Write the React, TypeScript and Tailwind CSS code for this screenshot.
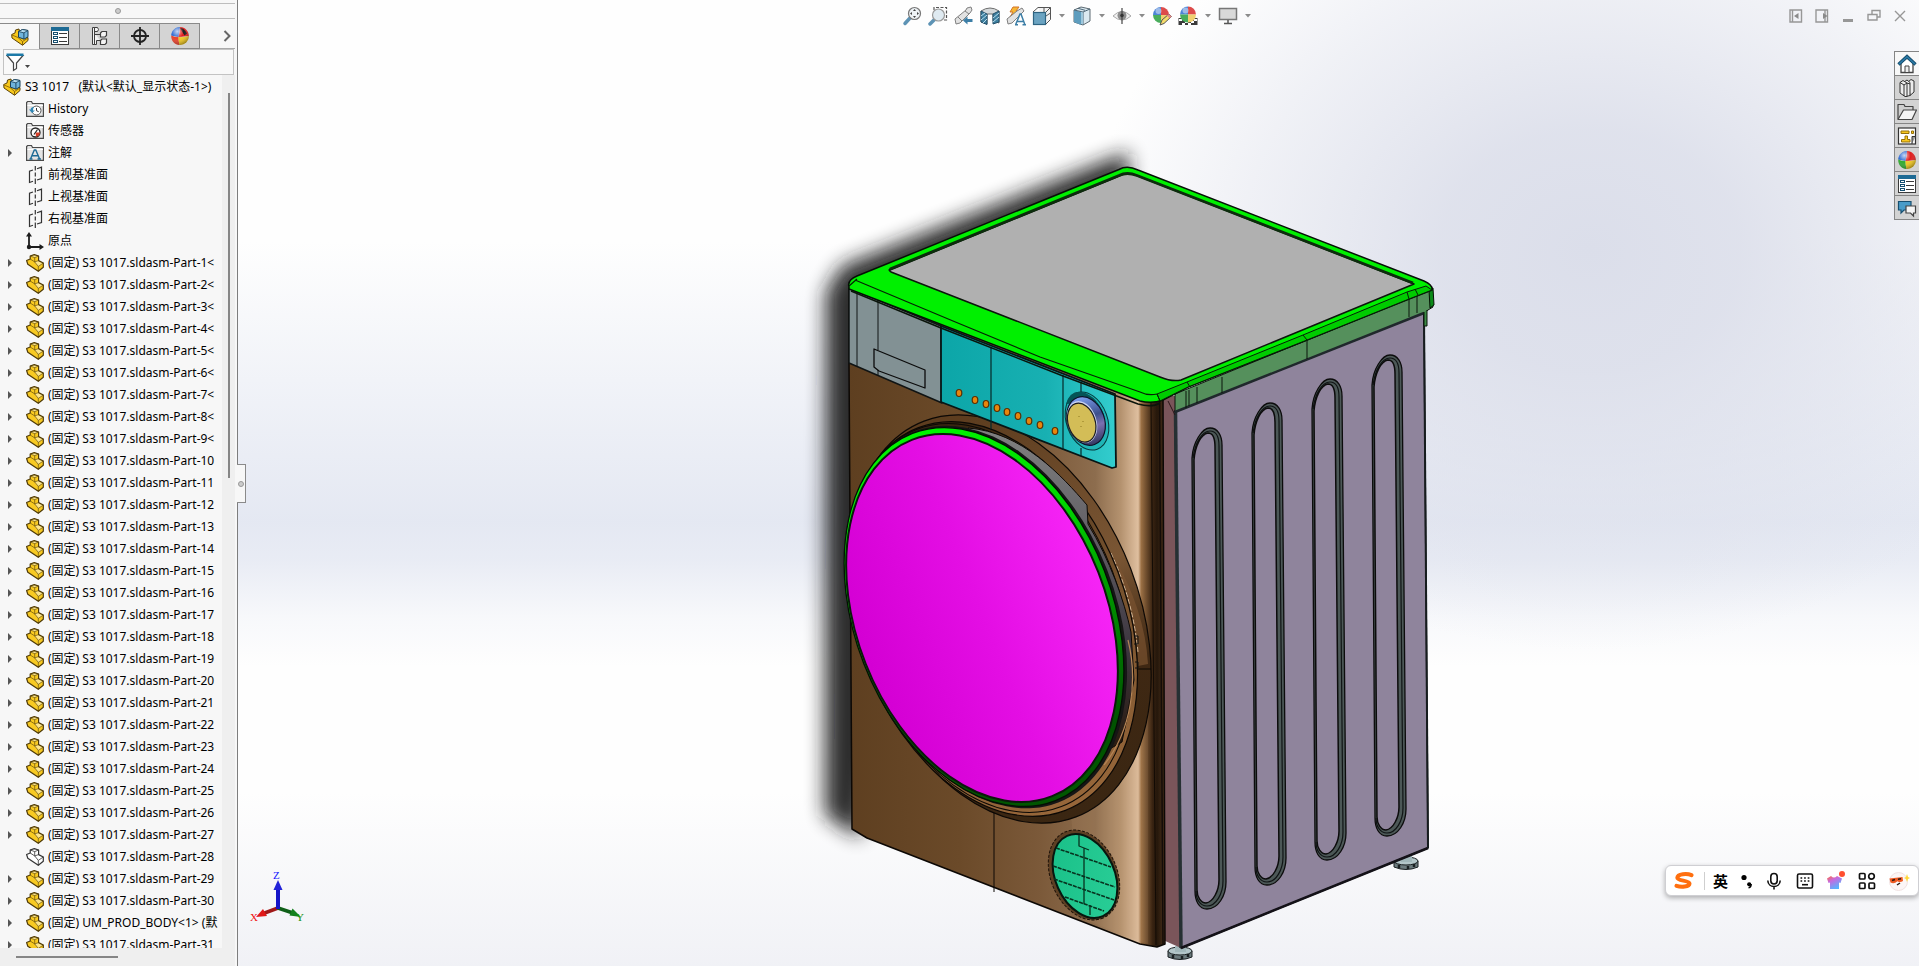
import type { ReactNode } from 'react';

const FONT = "font-['Noto_Sans','Noto_Sans_CJK_SC',sans-serif]";

/* ---------- shared icon pieces ---------- */

function PartIcon({ hollow = false }: { hollow?: boolean }) {
  const front = hollow ? '#ffffff' : '#f8ca22';
  const top = hollow ? '#ffffff' : '#fde58a';
  const line = hollow ? '#333333' : '#4f3a06';
  return (
    <svg viewBox="0 0 18 18" className="size-[18px] shrink-0" aria-hidden="true">
      <g strokeLinejoin="round">
        <path d="M.6 6.500 4.200 5V2L8.300.600 12.600 2V6.600L17.300 9V13.200L12.300 17.300 1.800 10.200Z" fill={front} />
        <path d="M4.200 2 8.300.600 12.600 2 8.700 3.600ZM8.700 7.900 12.600 6.600 17.300 9 12.300 12.400Z" fill={top} />
        <path d="M8.700 3.600V7.900L12.300 12.400M4.200 2 8.700 3.600 12.600 2M4.200 5 8.700 7.900 12.600 6.600M12.300 17.300V12.400L17.300 9" fill="none" stroke={line} strokeWidth=".8" opacity={hollow ? 1 : 0.75} />
        <path d="M.6 6.500 4.200 5V2L8.300.600 12.600 2V6.600L17.300 9V13.200L12.300 17.300 1.800 10.200Z" fill="none" stroke={line} strokeWidth="1.200" />
      </g>
    </svg>
  );
}

function AssemblyIcon() {
  return (
    <svg viewBox="0 0 18 18" className="size-[18px] shrink-0" aria-hidden="true">
      <path d="M.7 6.500 4 5 4.500 2 8 1 9 8 17 9.500V12.500L11.600 17.300 1 10Z" fill="#f7c81c" stroke="#5a4208" strokeLinejoin="round" />
      <path d="M1 7 7 9.500 11.500 13.500 17 10" fill="none" stroke="#8a6508" strokeWidth=".9" />
      <path d="M11.500 13.500V17" stroke="#8a6508" />
      <path d="m7.500 3.500 4-2 5.500 1v6.300l-4 2.400-5.500-2Z" fill="#6fb4dc" stroke="#173f58" strokeLinejoin="round" />
      <path d="m7.500 3.500 5.300 1.300 4.200-2.300-5.500-1Z" fill="#b7def2" stroke="#173f58" strokeWidth=".8" strokeLinejoin="round" />
      <path d="M12.900 4.800V11" stroke="#173f58" strokeWidth=".9" />
    </svg>
  );
}

function ListIcon() {
  return (
    <svg viewBox="0 0 20 20" className="size-5" aria-hidden="true">
      <rect x="1.500" y="1.500" width="17" height="17" fill="#fff" stroke="#3b3b3b" />
      <rect x="1" y="1" width="18" height="4" fill="#1d6a94" />
      <g fill="#fff" stroke="#174f70">
        <rect x="3.500" y="6.500" width="4" height="2" />
        <rect x="3.500" y="10.500" width="4" height="2" />
        <rect x="3.500" y="14.500" width="4" height="2" />
      </g>
      <path d="M9 7.500h8M9 11.500h8M9 15.500h8" stroke="#3b3b3b" />
    </svg>
  );
}

function BeachBall({ id, wedge = false }: { id: string; wedge?: boolean }) {
  return (
    <svg viewBox="0 0 20 20" className="size-5" aria-hidden="true">
      <defs>
        <radialGradient id={id} cx=".35" cy=".25" r=".8">
          <stop offset="0" stopColor="#fff" stopOpacity=".75" />
          <stop offset=".45" stopColor="#fff" stopOpacity="0" />
          <stop offset="1" stopColor="#000" stopOpacity=".4" />
        </radialGradient>
      </defs>
      <path d="M10 1C6 1 1.500 4 1.200 9.500L8.500 11Z" fill="#2060d0" />
      <path d="M10 1C15 1 18.800 5 18.800 10L8.500 11Q10 6 10 1Z" fill="#e01c1c" />
      <path d="M1.200 9.500Q4 11 8.500 11 8.500 15 9.500 19C5 19 1 15 1.200 9.500Z" fill={wedge ? '#e8402a' : '#2faa2f'} />
      <path d="M18.800 10Q14 11.500 8.500 11 8.500 15 9.500 19C15 19 18.800 15 18.800 10Z" fill="#f3c91c" />
      {wedge && <path d="M10 2Q14 2 17 7.500L14.500 9.500Z" fill="#1c1c1c" />}
      <circle cx="10" cy="10" r="9" fill={`url(#${id})`} />
    </svg>
  );
}

function Folder({ children }: { children: ReactNode }) {
  return (
    <svg viewBox="0 0 18 18" className="size-[18px] shrink-0" aria-hidden="true">
      <path d="M.6 16.400V2.500L1.600 1.500H5.500L6.500 3.500H17.400V16.400Z" fill="#e4e4e4" stroke="#4a4a4a" strokeWidth="1.200" />
      <path d="M1.500 5.500H17" stroke="#fff" />
      {children}
    </svg>
  );
}

const HistoryIcon = () => (
  <Folder>
    <circle cx="10.500" cy="10.500" r="4.500" fill="#fff" stroke="#555" />
    <path d="M10.500 8v2.700l2.200 1" fill="none" stroke="#333" />
    <path d="M3 9.500 6 13 9 10.500H7Q7 8 8 7 4.500 7 4.800 9.500Z" fill="#2f86b5" />
  </Folder>
);
const SensorIcon = () => (
  <Folder>
    <circle cx="9.500" cy="10.500" r="4.500" fill="#fff" stroke="#222" strokeWidth="1.300" />
    <path d="M9.500 10.500h4.500a4.500 4.500 0 0 1-4 4.300Z" fill="#d8402a" />
    <path d="m8 12.500 3.500-5" stroke="#222" strokeWidth="1.200" />
  </Folder>
);
const NoteIcon = () => (
  <Folder>
    <path d="M4.500 15 8.300 6h1.500l3.800 9M6.300 11.800h5.500M3.500 15h3M11.500 15h3.500" fill="none" stroke="#1d6a94" strokeWidth="1.400" />
  </Folder>
);
const PlaneIcon = () => (
  <svg viewBox="0 0 18 18" className="size-[18px] shrink-0" aria-hidden="true">
    <path d="M7 4 3.500 5.200V16.500L7 15.300M11 2.700 15.500 1.200V12.500L11 14" fill="none" stroke="#333" strokeWidth="1.200" />
    <path d="M9.300 0V4.500M9.300 6.500V10.500M9.300 12.500V18" stroke="#333" strokeWidth="1.200" />
  </svg>
);
const OriginIcon = () => (
  <svg viewBox="0 0 18 18" className="size-[18px] shrink-0" aria-hidden="true">
    <path d="M3 3V15H14" fill="none" stroke="#1c1c1c" strokeWidth="1.800" />
    <path d="M0 4.500 3 0 6 4.500ZM13.500 12 18 15 13.500 18Z" fill="#1c1c1c" />
    <circle cx="3" cy="15" r="2.200" fill="#1c1c1c" />
  </svg>
);

/* ---------- feature tree ---------- */

type Row = { label: string; icon: ReactNode; arrow: boolean };

const partRow = (n: number): Row => ({
  label: `(固定) S3 1017.sldasm-Part-${n}${n < 10 ? '<' : ''}`,
  icon: <PartIcon hollow={n === 28} />,
  arrow: n !== 28,
});

const rows: Row[] = [
  { label: 'History', icon: <HistoryIcon />, arrow: false },
  { label: '传感器', icon: <SensorIcon />, arrow: false },
  { label: '注解', icon: <NoteIcon />, arrow: true },
  { label: '前视基准面', icon: <PlaneIcon />, arrow: false },
  { label: '上视基准面', icon: <PlaneIcon />, arrow: false },
  { label: '右视基准面', icon: <PlaneIcon />, arrow: false },
  { label: '原点', icon: <OriginIcon />, arrow: false },
  ...Array.from({ length: 30 }, (_, i) => partRow(i + 1)),
  { label: '(固定) UM_PROD_BODY<1> (默', icon: <PartIcon />, arrow: true },
  partRow(31),
];

const panelTabs: { name: string; icon: ReactNode }[] = [
  { name: 'FeatureManager', icon: <AssemblyIcon /> },
  { name: 'PropertyManager', icon: <ListIcon /> },
  {
    name: 'ConfigurationManager',
    icon: (
      <svg viewBox="0 0 20 20" className="size-5" fill="#f4f4f4" stroke="#3f3f3f" aria-hidden="true">
        <path d="M3.500 1.500h4l1 2-1 2h-4ZM3.500 5.500V18.500H6.500V14.500H10M3.500 8.500H11" />
        <path d="M2.500 1.500h2v17h-2Z" />
        <path d="m10.500 7 1.500-1.500h4.500v4L15 11h-4.500ZM10.500 14.500 12 13h4.500v4L15 18.500h-4.500Z" strokeWidth="1.200" />
      </svg>
    ),
  },
  {
    name: 'DimXpertManager',
    icon: (
      <svg viewBox="0 0 20 20" className="size-5" fill="none" stroke="#222" strokeWidth="1.800" aria-hidden="true">
        <circle cx="10" cy="10" r="6" />
        <path d="M10 1v18M1 10h18" />
      </svg>
    ),
  },
  { name: 'DisplayManager', icon: <BeachBall id="ball-tab" wedge /> },
];

function Sidebar() {
  return (
    <aside className="flex h-full w-[238px] shrink-0 flex-col border-r border-[#7d7d7d] bg-[#f7f7f7]">
      <div className="mt-[3px] mr-0.5 flex h-4 items-center justify-center border-y border-[#bdbdbd]">
        <span className="size-1.5 rounded-full border border-[#999] bg-[#ccc]" />
      </div>
      <div className="mt-1 mr-0.5 flex h-[26px] items-stretch" role="tablist">
        {panelTabs.map((t, i) => (
          <button
            key={t.name}
            role="tab"
            aria-label={t.name}
            aria-selected={i === 0}
            className={
              i === 0
                ? 'flex w-10 items-center justify-center border-t border-r border-[#8a8a8a] bg-[#f7f7f7]'
                : 'flex w-10 items-center justify-center border-y border-r border-[#8a8a8a] bg-[#d4d4d4]'
            }
          >
            {t.icon}
          </button>
        ))}
        <button aria-label="更多" className="flex flex-1 items-center justify-end border-b border-[#a8a8a8] pr-1">
          <svg viewBox="0 0 8 12" className="h-3 w-2" fill="none" stroke="#666" strokeWidth="2" aria-hidden="true">
            <path d="m1.500 1 5 5-5 5" />
          </svg>
        </button>
      </div>
      <label className="mr-[3px] ml-[3px] flex h-[26px] shrink-0 items-center border border-[#c3c3c3] bg-[#f9f9f9] pl-0.5">
        <svg viewBox="0 0 24 20" className="h-5 w-6 shrink-0" aria-hidden="true">
          <path d="M1 3.500 7.500 11V18.500L10.500 16.500V11L17 3.500Z" fill="#fff" stroke="#444" strokeWidth="1.200" />
          <path d="M.5 1.500h17v2.500h-17Z" fill="#1d7aa8" />
          <path d="M19 13h5l-2.500 3Z" fill="#444" />
        </svg>
        <input aria-label="过滤" className="min-w-0 flex-1 bg-transparent text-xs outline-none" />
      </label>
      <div className="flex min-h-0 flex-1">
        <div className={`min-w-0 flex-1 overflow-hidden pt-px text-xs text-black ${FONT}`}>
          <div className="flex h-[22px] items-center gap-1 pl-[3px] whitespace-pre">
            <AssemblyIcon />
            <span>{'S3 1017   (默认<默认_显示状态-1>)'}</span>
          </div>
          <ul>
            {rows.map((r) => (
              <li key={r.label} className="flex h-[22px] items-center pl-2 whitespace-nowrap">
                <span className="w-[18px] shrink-0">
                  {r.arrow && (
                    <svg viewBox="0 0 4 8" className="h-2 w-1" aria-hidden="true">
                      <path d="M0 0 4 4 0 8Z" fill="#555" />
                    </svg>
                  )}
                </span>
                {r.icon}
                <span className="ml-1">{r.label}</span>
              </li>
            ))}
          </ul>
        </div>
        <div className="mr-0.5 flex w-[13px] justify-center bg-[#efefef] pt-[18px]">
          <span className="h-[385px] w-0.5 bg-[#858585]" />
        </div>
      </div>
      <div className="mr-0.5 h-[18px] shrink-0 bg-[#efefef] pt-2 pl-4">
        <div className="h-0.5 w-[102px] bg-[#858585]" />
      </div>
    </aside>
  );
}

/* ---------- heads-up toolbar ---------- */

const Caret = () => (
  <svg viewBox="0 0 6 4" className="mx-[7px] h-1 w-1.5" aria-hidden="true">
    <path d="M0 0H6L3 3.500Z" fill="#8b8b8b" />
  </svg>
);

const viewTools: { name: string; caret?: boolean; icon: ReactNode }[] = [
  {
    name: '整屏显示全图',
    icon: (
      <>
        <path d="M3 17.500 8 12" stroke="#5d93b5" strokeWidth="3.500" strokeLinecap="round" />
        <circle cx="12.500" cy="7.500" r="6" fill="#eef3f6" stroke="#777" strokeWidth="1.200" />
        <path d="m12.500 3 1.500 2h-3ZM12.500 12l1.500-2h-3ZM8 7.500l2-1.500v3ZM17 7.500l-2-1.500v3Z" fill="#444" />
      </>
    ),
  },
  {
    name: '局部放大',
    icon: (
      <>
        <path d="M6 4V1.500H18.500V14H16" fill="none" stroke="#555" strokeWidth="1.200" strokeDasharray="3 1.500" />
        <path d="M2 18 7 13" stroke="#5d93b5" strokeWidth="3.500" strokeLinecap="round" />
        <circle cx="10.500" cy="9" r="6" fill="#dfeaf1" stroke="#999" strokeWidth="1.200" />
      </>
    ),
  },
  {
    name: '上一视图',
    icon: (
      <>
        <path d="M1 13 12 4 13 2 17 1 18 4 16 7 6 17 2 18Z" fill="#e2e2e2" stroke="#808080" />
        <path d="m4 11 4 4M11 5l4 3" stroke="#808080" />
        <path d="M9 14.500 13.500 10.500V13H18.500V16H13.500V18.500Z" fill="#3c7ea6" />
      </>
    ),
  },
  {
    name: '剖面视图',
    icon: (
      <>
        <path d="M1 5Q10-1 19 5V17L13 15V8H7V18L1 16Z" fill="#d4d8da" stroke="#6c6c6c" />
        <path d="M1 5 7 8V18.500L1 16Z" fill="#3d7f9f" stroke="#24506a" />
        <path d="m13 8 6-3v11l-6 2Z" fill="#3d7f9f" stroke="#24506a" />
        <path d="m1 10 4-3M1 14l6-5M3 17l4-4M13 12l6-5M13 16l6-5" stroke="#b9dcec" />
      </>
    ),
  },
  {
    name: '动态注解视图',
    icon: (
      <>
        <path d="M7 1H13L10 5H13L4 11 7 6H4Z" fill="#f7b733" stroke="#d2752a" />
        <path d="M1 13 11 5 16 2 18 5 6 17 2 18Z" fill="#e2e2e2" stroke="#808080" />
        <path d="M9.500 19 14 8h1l4 11M11.500 15.500h6M9 18.700h3M16.500 18.700H20" fill="none" stroke="#3c7ea6" strokeWidth="1.500" />
      </>
    ),
  },
  {
    name: '视图定向',
    caret: true,
    icon: (
      <>
        <path d="M6 1.500H18.500V13.500L14 18M1 6 6 1.500M18.500 1.500 14 6M12 1.500V6M14 10l4.500-3" fill="#f3f3f3" stroke="#555" />
        <rect x="1.500" y="6.500" width="12" height="12" fill="#6ba3c1" stroke="#2f6482" strokeWidth="1.200" />
      </>
    ),
  },
  {
    name: '显示样式',
    caret: true,
    icon: (
      <>
        <path d="M2 4 9 1 18 3V15L11 19 2 16Z" fill="#dbe9f0" stroke="#5c6a72" />
        <path d="m2 4 7 2v13l-7-3Z" fill="#5e9dbe" />
        <path d="m6 2.300 7 2M11 6v13M2 4l9 2 7-3" fill="none" stroke="#4c6676" />
        <path d="m9 6 2 .5v12l-2-.8Z" fill="#9dc7dc" />
      </>
    ),
  },
  {
    name: '隐藏/显示项目',
    caret: true,
    icon: (
      <>
        <path d="M1 10Q10 1 19 10 10 18 1 10Z" fill="#f1f1f1" stroke="#a9a9a9" />
        <circle cx="10" cy="9.500" r="4.500" fill="#8c8c8c" />
        <path d="M10 2V18" stroke="#444" strokeWidth="1.200" />
        <circle cx="10" cy="9.500" r="1.800" fill="#333" />
      </>
    ),
  },
  {
    name: '编辑外观',
    icon: (
      <>
        <path d="M9 1A8 8 0 0 0 1 9H9Z" fill="#4d84d6" />
        <path d="M9 1a8 8 0 0 1 8 8H9Z" fill="#dd4b4b" />
        <path d="M1 9a8 8 0 0 0 8 8V9Z" fill="#49ad5c" />
        <path d="M17 9a8 8 0 0 1-8 8V9Z" fill="#f0d070" />
        <circle cx="6.500" cy="5" r="3" fill="#fff" opacity=".45" />
        <path d="m8 19 2-5 7-6 2.500 2.500L12 17.500Z" fill="#f6dc6b" stroke="#555" />
        <path d="m15 9.500 2.500 3 2.200-2L17 8Z" fill="#e58b8b" />
      </>
    ),
  },
  {
    name: '应用布景',
    caret: true,
    icon: (
      <>
        <rect x="0.500" y="12" width="19" height="7" fill="#3b3b3b" />
        <path d="M1 13h3v2H1ZM7 15h3v2H7ZM13 15h3v2h-3ZM16 13h3v2h-3ZM4 17h3v2H4ZM10 17h3v2h-3Z" fill="#fff" />
        <path d="M10 .5A8 8 0 0 0 2 8.500H10Z" fill="#4d84d6" />
        <path d="M10 .5A8 8 0 0 1 18 8.500H10Z" fill="#dd4b4b" />
        <path d="M2 8.500A8 8 0 0 0 10 16.500V8.500Z" fill="#49ad5c" />
        <path d="M18 8.500A8 8 0 0 1 10 16.500V8.500Z" fill="#f0d070" />
        <circle cx="7.500" cy="4.500" r="3" fill="#fff" opacity=".45" />
      </>
    ),
  },
  {
    name: '视图设定',
    caret: true,
    icon: (
      <>
        <rect x="1.500" y="2.500" width="17" height="11" fill="#d9d9d9" stroke="#777" strokeWidth="1.500" />
        <path d="M10 14v3M6 17.500h8" stroke="#555" strokeWidth="1.500" />
      </>
    ),
  },
];

function ViewToolbar() {
  return (
    <div role="toolbar" aria-label="前导视图" className="flex items-center">
      {viewTools.map((t) => (
        <div key={t.name} className="flex items-center">
          <button aria-label={t.name} className="mx-[3px] block size-5">
            <svg viewBox="0 0 20 20" className="size-5" aria-hidden="true">{t.icon}</svg>
          </button>
          {t.caret && <span className="-mx-[3px]"><Caret /></span>}
        </div>
      ))}
    </div>
  );
}

const windowButtons: { name: string; d: string; fill?: string }[] = [
  { name: '左面板', d: 'M1 1H12.500V13H1ZM3.500 1V13', fill: 'M9.500 4V10L5 7Z' },
  { name: '右面板', d: 'M1 1H12.500V13H1ZM10 1V13', fill: 'M8 4V10L12.500 7Z' },
  { name: '最小化', d: 'M2 11.500H12' },
  { name: '还原', d: 'M5 5V1.500H13V8H10M1 5.500H10V11H1Z' },
  { name: '关闭', d: 'M2 2 12 12M12 2 2 12' },
];

function WindowButtons() {
  return (
    <div className="absolute top-[9px] right-3 flex gap-3">
      {windowButtons.map((b) => (
        <button key={b.name} aria-label={b.name} className="size-3.5">
          <svg viewBox="0 0 14 14" className="size-3.5" aria-hidden="true">
            <path d={b.d} fill="none" stroke="#979797" strokeWidth={b.name === '最小化' ? 3 : 1.400} />
            {b.fill && <path d={b.fill} fill="#8a8a8a" />}
          </svg>
        </button>
      ))}
    </div>
  );
}

/* ---------- task pane ---------- */

const taskTabs: { name: string; icon: ReactNode }[] = [
  {
    name: '主页',
    icon: (
      <svg viewBox="0 0 20 20" className="size-5" aria-hidden="true">
        <path d="M4 9V18.500H16V9L10 4Z" fill="#fff" stroke="#444" strokeWidth="1.300" />
        <path d="M8 18V12h4v6" fill="#eee" stroke="#444" />
        <path d="M1.500 10.500 10 2.500 18.500 10.500" fill="none" stroke="#174f70" strokeWidth="3.400" />
        <path d="M2 10 10 2.700 18 10" fill="none" stroke="#2b7ca8" strokeWidth="1.500" />
      </svg>
    ),
  },
  {
    name: '设计库',
    icon: (
      <svg viewBox="0 0 20 20" className="size-5" fill="#ededed" stroke="#333" strokeLinejoin="round" aria-hidden="true">
        <path d="m11 4 3-2.500 3 1.500v11l-4 3.500Z" />
        <path d="m7 4 3-2 3 2.500v13l-4 1Z" />
        <path d="m3 4.500 3-2 4 2.500v13.500H8l-5-3.500Z" />
        <path d="M3 4.500 7 7V18M7 7l3-2M10 5l3 1" fill="none" />
      </svg>
    ),
  },
  {
    name: '文件探索器',
    icon: (
      <svg viewBox="0 0 20 20" className="size-5" stroke="#444" strokeWidth="1.200" strokeLinejoin="round" aria-hidden="true">
        <path d="M1 17V2.500H7L8 4.500H16V8" fill="#cfcfcf" />
        <path d="M1 17.500 6.500 8H19.500L15 17.500Z" fill="#f4f4f4" />
      </svg>
    ),
  },
  {
    name: '视图调色板',
    icon: (
      <svg viewBox="0 0 20 20" className="size-5" aria-hidden="true">
        <rect x="1.500" y="2" width="17" height="16" fill="#fff" stroke="#333" strokeWidth="1.200" />
        <path d="M4 5h8v2.500H4ZM14.500 5h2v2.500h-2ZM8 10h2.500v3.500H13V16H4.500v-2.500H8Z" fill="#f9c81d" stroke="#94700a" />
        <path d="M15 18V10.500h3.500" fill="#999" stroke="#333" />
      </svg>
    ),
  },
  { name: '外观', icon: <BeachBall id="ball-task" /> },
  { name: '自定义属性', icon: <ListIcon /> },
  {
    name: '论坛',
    icon: (
      <svg viewBox="0 0 20 20" className="size-5" strokeWidth="1.200" aria-hidden="true">
        <path d="M1.500 3.500H14V12H7L4 15V12H1.500Z" fill="#4a9cc9" stroke="#174f70" />
        <path d="M9 8H18.500V15H16.500V18L13.500 15H9Z" fill="#f4f4f4" stroke="#444" />
      </svg>
    ),
  },
];

function TaskPane() {
  return (
    <nav aria-label="任务窗格" className="absolute top-[51px] right-0 w-[25px] border-t border-l border-[#858585]">
      {taskTabs.map((t, i) => (
        <button
          key={t.name}
          aria-label={t.name}
          className={
            i === 0
              ? 'flex h-6 w-full items-center justify-center border-b border-[#858585] bg-[#f8f8f8]'
              : 'flex h-6 w-full items-center justify-center border-b border-[#858585] bg-[#d3d3d3]'
          }
        >
          {t.icon}
        </button>
      ))}
    </nav>
  );
}

/* ---------- input method bar ---------- */

function InputMethodBar() {
  return (
    <div className="absolute right-0 bottom-[70px] flex h-[31px] w-[254px] items-center rounded-md border border-[#cfcfd3] bg-white pl-2 shadow-[0_2px_5px_rgba(0,0,0,0.3)]">
      <svg viewBox="0 0 20 18" className="mr-2.5 h-[18px] w-5" aria-hidden="true">
        <path d="M17.500 3.200C13 1.200 3.500 1.800 3.300 5.800 3.200 9 15.600 8.300 15.500 11.600 15.400 15 7 15.400 2.500 13.800" fill="none" stroke="#ff6f0f" strokeWidth="4" strokeLinecap="round" />
      </svg>
      <span className="mr-2 h-[18px] w-px bg-[#cfcfcf]" />
      <button className="mr-3 font-['Noto_Sans_CJK_SC',sans-serif] text-[15px] leading-none font-bold text-black">英</button>
      <div className="flex items-center gap-3">
        <button aria-label="标点">
          <svg viewBox="0 0 14 18" className="h-[18px] w-3.5" aria-hidden="true">
            <circle cx="4" cy="5.500" r="2.600" />
            <circle cx="9.200" cy="12.300" r="2.100" />
            <path d="M11.200 12Q11.500 15 8.500 16" fill="none" stroke="#000" strokeWidth="1.300" />
          </svg>
        </button>
        <button aria-label="语音">
          <svg viewBox="0 0 16 18" className="h-[18px] w-4" fill="none" stroke="#111" strokeWidth="1.600" aria-hidden="true">
            <rect x="4.800" y="1.500" width="6.400" height="10.500" rx="3.200" />
            <path d="M1.800 8.500C2 16.500 14 16.500 14.200 8.500M8 14.500V17.500" />
          </svg>
        </button>
        <button aria-label="软键盘" className="ml-0.5">
          <svg viewBox="0 0 18 18" className="size-[18px]" fill="none" stroke="#111" strokeWidth="1.600" aria-hidden="true">
            <rect x="1.500" y="2" width="15" height="14" rx="1.500" />
            <path d="M4.500 6h9M4.500 9h9" strokeDasharray="1.700 1.900" />
            <path d="M6 12.700h6" />
          </svg>
        </button>
        <button aria-label="皮肤">
          <svg viewBox="0 0 20 22" className="h-[22px] w-5" aria-hidden="true">
            <defs>
              <linearGradient id="shirt" x1="0" y1="0" x2=".6" y2="1">
                <stop offset="0" stopColor="#ff6a3c" />
                <stop offset=".4" stopColor="#c56be0" />
                <stop offset="1" stopColor="#53b5ff" />
              </linearGradient>
            </defs>
            <path d="M5 6Q8 9 11 6L16 8.500 14.500 13 13 12.500V19H4V12.500L2.500 13 1 8.500Z" fill="url(#shirt)" />
            <circle cx="16" cy="4" r="3" fill="#ff4f30" />
          </svg>
        </button>
        <button aria-label="工具箱">
          <svg viewBox="0 0 18 18" className="size-[18px]" fill="none" stroke="#111" strokeWidth="1.700" aria-hidden="true">
            <rect x="1.500" y="1.500" width="5.500" height="5.500" rx="1" />
            <circle cx="13.500" cy="4.300" r="2.800" />
            <rect x="1.500" y="11" width="5.500" height="5.500" rx="1" />
            <rect x="11" y="11" width="5.500" height="5.500" rx="1" />
          </svg>
        </button>
        <button aria-label="助手">
          <svg viewBox="0 0 22 22" className="size-[22px]" aria-hidden="true">
            <circle cx="10.500" cy="11.500" r="9" fill="#fcf6f6" stroke="#f1e2e2" />
            <path d="M1.500 8.500 14.500 7 15 11Q12 13 9.500 11.200 6 14.500 2.500 12.500Z" fill="#ef5a22" />
            <path d="m4 10.500 3-1M10 9.200l3-.4M9 15l3-2" stroke="#2b1a12" strokeWidth="1.500" />
            <path d="m19 4 1 3 2 1-2 1-1 3-1-3-2-1 2-1Z" fill="#ffd83a" />
          </svg>
        </button>
      </div>
    </div>
  );
}

/* ---------- 3D scene ---------- */

const grooves = [
  { x: 1192, top: 428, bottom: 909 },
  { x: 1252, top: 403, bottom: 885 },
  { x: 1312, top: 379, bottom: 860 },
  { x: 1372, top: 355, bottom: 836 },
];

const leds = [
  [959, 393], [975, 400], [986, 404], [997, 408], [1007, 412],
  [1018, 416], [1029, 421], [1040, 425], [1055, 431],
];

function Groove({ x, top, bottom }: { x: number; top: number; bottom: number }) {
  const outer = `M${x} ${top + 30}C${x + 1} ${top + 14} ${x + 10} ${top} ${x + 18} ${top}C${x + 26} ${top} ${x + 30} ${top + 8} ${x + 30} ${top + 17}L${x + 34} ${bottom - 27}C${x + 34} ${bottom - 13} ${x + 26} ${bottom} ${x + 15} ${bottom}C${x + 7} ${bottom} ${x + 3} ${bottom - 8} ${x + 3} ${bottom - 18}Z`;
  const middle = `M${x + 1} ${top + 30}C${x + 3} ${top + 15} ${x + 10} ${top + 3} ${x + 18} ${top + 3}C${x + 24} ${top + 3} ${x + 27} ${top + 9} ${x + 27} ${top + 18}L${x + 31} ${bottom - 28}C${x + 31} ${bottom - 15} ${x + 24} ${bottom - 3} ${x + 15} ${bottom - 3}C${x + 8} ${bottom - 3} ${x + 4} ${bottom - 10} ${x + 4} ${bottom - 18}`;
  const inner = `M${x + 2} ${top + 32}C${x + 3} ${top + 18} ${x + 9} ${top + 6} ${x + 16} ${top + 5}C${x + 21} ${top + 5} ${x + 23} ${top + 11} ${x + 23} ${top + 19}L${x + 27} ${bottom - 29}C${x + 27} ${bottom - 18} ${x + 21} ${bottom - 7} ${x + 14} ${bottom - 6}C${x + 9} ${bottom - 6} ${x + 5} ${bottom - 12} ${x + 5} ${bottom - 19}Z`;
  return (
    <g>
      <path d={outer} fill="#4c5857" stroke="#0c0c0c" strokeWidth="1.300" />
      <path d={middle} fill="none" stroke="#101415" strokeWidth="1.200" />
      <path d={inner} fill="#8f849c" stroke="#0c0c0c" strokeWidth="1.500" />
    </g>
  );
}

function Foot({ x, y }: { x: number; y: number }) {
  return (
    <g stroke="#1a2022" strokeWidth="1">
      <path d={`M${x - 12} ${y}V${y + 6}Q${x} ${y + 11} ${x + 12} ${y + 6}V${y}Z`} fill="#6c7b7e" />
      <ellipse cx={x} cy={y} rx="12" ry="4" fill="#b3c6c9" />
      <path d={`M${x - 7} ${y + 4}V${y + 7}M${x + 2} ${y + 5}V${y + 8}M${x + 8} ${y + 3}V${y + 6}`} strokeWidth="2.500" />
      <path d={`M${x - 5} ${y - 5}H${x + 6}V${y + 1}H${x - 5}Z`} fill="#a2b8bb" stroke="none" />
    </g>
  );
}

function Washer() {
  return (
    <g strokeLinejoin="round">
      <path d="M1128 152 842 266 826 292 825 815 860 838 900 600 1130 300Z" fill="#1c1c1e" filter="url(#soft)" opacity=".92" />

      <Foot x={1180} y={951} />
      <Foot x={1406} y={861} />

      {/* side wall */}
      <path d="M1160 396 1175 396 1181 948 1163 940Z" fill="#7a555a" />
      <path d="M1175 411 1424 312 1428 848 1181 948Z" fill="#8f849c" stroke="#0a0a0a" strokeWidth="1.500" />
      <path d="M1175.500 411 1181 948" stroke="#263033" strokeWidth="3.500" />
      <path d="M1181 948 1428 848" stroke="#141218" strokeWidth="2.500" />
      <path d="M1424 314 1428 848" stroke="#161c1e" strokeWidth="2" />
      {grooves.map((g) => <Groove key={g.x} {...g} />)}

      {/* front wall */}
      <path d="M849 363 849 288 1140 400 1163 398 1165 944 1157 947 1140 944 867 838 852 829Z" fill="url(#front)" stroke="#0c0805" strokeWidth="1.500" />
      <path d="M1151 402 1156 945" stroke="#120b05" />
      <path d="M1159.500 400 1163 944" stroke="#140c08" strokeWidth="1.500" />
      <path d="M994 806V892" stroke="#0c0805" />
      <path d="M1068 780Q1110 760 1124 700L1135 640 1148 700V944L1080 918Z" fill="#c49a74" opacity=".12" />

      {/* door recess */}
      <ellipse cx="1000" cy="619" rx="212" ry="140" transform="rotate(69 1000 619)" fill="url(#recess)" stroke="#0c0805" strokeWidth="1.200" />
      <path d="M1112 553Q1145 610 1148 664L1138 666Q1138 620 1112 553Z" fill="#7a5330" opacity=".7" />
      <path d="M1111 553Q1133 600 1138 652" fill="none" stroke="#f0d4b4" strokeDasharray="5 2" opacity=".8" />
      <ellipse cx="992" cy="619" rx="205" ry="134.500" transform="rotate(69 992 619)" fill="url(#floor)" stroke="#0c0805" strokeWidth="1.200" />
      <ellipse cx="989" cy="618" rx="202" ry="132" transform="rotate(69 989 618)" fill="none" stroke="#0c0805" />
      <path d="M968 428C1022 432 1062 476 1087 505L1088 524C1110 560 1124 600 1131 632L1134 680 1122 742 1090 760 1020 520Z" fill="url(#gasket)" stroke="#0c0805" />
      <path d="M1138 669H1151" stroke="#0c0805" />
      <path d="M1128 640C1138 680 1132 730 1104 765" fill="none" stroke="#b58456" strokeWidth="1.200" />
      <path d="M1134 636h4v8h-4M1135 662h3v6h-3" fill="none" stroke="#111" />

      {/* door */}
      <ellipse cx="986" cy="617" rx="199" ry="130" transform="rotate(68.700 986 617)" fill="#151515" />
      <ellipse cx="984" cy="617" rx="197" ry="129" transform="rotate(68.700 984 617)" fill="url(#ring)" stroke="#031003" strokeWidth="1.300" />
      <ellipse cx="982" cy="618" rx="191.500" ry="125" transform="rotate(68.500 982 618)" fill="url(#glass)" stroke="#0d180d" strokeWidth="2" />

      {/* drawer */}
      <path d="M849 288 941 326 942 403 849 363Z" fill="#829194" stroke="#101414" strokeWidth="1.500" />
      <path d="M857 292V366M878 301V350M878 370V375" stroke="#101414" />
      <path d="M874 349 925 370V388L879 371 874 367Z" fill="#829194" stroke="#0b0b0b" strokeWidth="1.300" />

      {/* control panel */}
      <path d="M941 326 1115 394 1116 467 1112 468 941 402Z" fill="url(#teal)" stroke="#061616" strokeWidth="1.800" />
      <path d="M991 347V422M991 422V429M1063 375V450M1081 382V396M1081 448V456" stroke="#052828" strokeWidth="1.200" />
      {leds.map(([x, y]) => (
        <ellipse key={x} cx={x} cy={y} rx="2.800" ry="3.500" fill="#e8860c" stroke="#5a2f04" strokeWidth="1.200" />
      ))}
      <ellipse cx="1087" cy="421" rx="30" ry="20.500" transform="rotate(70 1087 421)" fill="#1fb5b6" stroke="#06393b" />
      <path d="M1066 404Q1070 390 1082 392 1098 396 1105 418L1096 402Z" fill="#055457" />
      <ellipse cx="1086" cy="421" rx="25" ry="18.500" transform="rotate(70 1086 421)" fill="url(#knob)" stroke="#0d1228" strokeWidth="1.200" />
      <ellipse cx="1082" cy="422" rx="21.500" ry="14.500" transform="rotate(72 1082 422)" fill="#c9d3f0" />
      <ellipse cx="1082.500" cy="422.500" rx="20" ry="13.500" transform="rotate(72 1082 422)" fill="#d3bd57" stroke="#1a1a22" strokeWidth="1.200" />
      <path d="M1079 416v1M1083 421v1M1081 426v1" stroke="#8d7820" />

      {/* lid */}
      <path d="M1175 394 1430 290 1433 307 1428 310 1424 313 1175 412Z" fill="#55905c" stroke="#0b150b" />
      <path d="M1175 412 1424 313" stroke="#20282c" strokeWidth="2.500" />
      <path d="M1424 312V326H1427V310" fill="#3a8a44" stroke="#0b150b" />
      <path d="M1186 391V408M1189 390V406M1197 387V403M1222 377V393M1307 341V359M1409 299V317M1417 296V313" stroke="#0b150b" />
      <path d="M1429 290 1433 288 1434 305 1430 308Z" fill="#0a8a18" stroke="#041004" />
      <path d="M849 287Q847 280 857 276L1119 169.500Q1127 165 1138 170L1424 281Q1433 285 1432 290L1409 299 1307 340 1188 387 1163 400Q1152 404 1140 401L849 289Z" fill="#00f000" stroke="#061006" strokeWidth="1.500" />
      <path d="M1157 394 1187 382 1303 335 1407 292 1426 286 1432 290 1409 299 1307 340 1188 387 1160 401Z" fill="#00cc00" stroke="#052005" />
      <path d="M1303 335 1307 340M1407 292 1409 299M1415 289 1418 295M1187 382 1190 387M1157 394 1160 401" stroke="#052005" />
      <path d="M855 280 953 321 1040 357 1140 392Q1148 396 1157 394M849 286 857 279" fill="none" stroke="#052005" strokeWidth="1.200" />
      <path d="M851 291 941 328 1063 376 1138 404Q1152 408 1160 403" fill="none" stroke="#0a140a" strokeWidth="1.500" />
      <path d="M890 270 1117 177Q1127 171 1138 176L1414 284 1181 380Q1172 382 1160 377L891 272Q888 270 890 269Z" fill="#b0b0b0" stroke="#0c160c" strokeWidth="1.500" />
      <path d="M890 269 1119 175.500Q1127 171.500 1137 175.500L1413 283" fill="none" stroke="#0c2c0c" strokeWidth="2.800" />
      <path d="m1168 401 7 14" stroke="#2b1518" />

      {/* pump filter vent */}
      <ellipse cx="1084" cy="875" rx="47" ry="33" transform="rotate(66 1084 875)" fill="#5d3f23" stroke="#1d1209" strokeDasharray="3 1.500" />
      <ellipse cx="1085" cy="876" rx="44" ry="29.500" transform="rotate(66 1085 876)" fill="url(#vent)" stroke="#07170f" strokeWidth="2" />
      <path d="M1056 848 1111 867M1053 866 1115 887M1054 879 1114 900M1065 897 1104 911" stroke="#07331f" strokeWidth="1.600" strokeDasharray="4 1" />
      <path d="M1084 848V904M1079 835V846L1089 850M1090 905V915" fill="none" stroke="#07331f" strokeWidth="1.300" />
    </g>
  );
}

function Triad() {
  return (
    <g className="font-['Liberation_Serif',serif] text-[11px]">
      <path d="M278 908 262 914" stroke="#a01818" strokeWidth="3.500" />
      <path d="m256 917 7-8 4 7Z" fill="#e01818" />
      <path d="M278 908 293 913" stroke="#0f5f18" strokeWidth="3.500" />
      <path d="m301 917-8.500-8.500-3 7Z" fill="#14801e" />
      <path d="M278 909V888" stroke="#1414c8" strokeWidth="4" />
      <path d="m278 880 4.500 10h-9Z" fill="#2222d8" />
      <text x="273" y="879" fill="#1414ff">Z</text>
      <text x="250" y="921" fill="#f01010">X</text>
      <text x="296" y="921" fill="#109010">Y</text>
    </g>
  );
}

function Scene() {
  return (
    <svg viewBox="238 0 1681 966" preserveAspectRatio="xMidYMid slice" className="absolute inset-0 size-full" role="img" aria-label="S3 1017">
      <defs>
        <filter id="soft" x="-20%" y="-20%" width="140%" height="140%"><feGaussianBlur stdDeviation="10" /></filter>
        <linearGradient id="band" x1="0" y1="0" x2="0" y2="1">
          <stop offset=".25" stopColor="#dde2ef" stopOpacity="0" />
          <stop offset=".45" stopColor="#dde2ef" stopOpacity=".55" />
          <stop offset=".54" stopColor="#dde2ef" stopOpacity=".78" />
          <stop offset=".58" stopColor="#dde2ef" stopOpacity=".65" />
          <stop offset=".64" stopColor="#dde2ef" stopOpacity=".2" />
          <stop offset=".69" stopColor="#dde2ef" stopOpacity="0" />
          <stop offset=".82" stopColor="#eff0f5" stopOpacity="0" />
          <stop offset="1" stopColor="#eff0f5" stopOpacity=".9" />
        </linearGradient>
        <radialGradient id="lobe" gradientUnits="userSpaceOnUse" cx="0" cy="0" r="1" gradientTransform="translate(1590 250) scale(500 400)">
          <stop offset="0" stopColor="#dbdeea" />
          <stop offset=".3" stopColor="#dbdeea" stopOpacity=".88" />
          <stop offset=".7" stopColor="#dbdeea" stopOpacity=".4" />
          <stop offset="1" stopColor="#dbdeea" stopOpacity="0" />
        </radialGradient>
        <linearGradient id="front" gradientUnits="userSpaceOnUse" x1="849" y1="0" x2="1165" y2="0">
          <stop offset="0" stopColor="#5e3f20" />
          <stop offset=".35" stopColor="#6b4a29" />
          <stop offset=".6" stopColor="#7b5939" />
          <stop offset=".78" stopColor="#8d6d4e" />
          <stop offset=".86" stopColor="#b4926f" />
          <stop offset=".915" stopColor="#dfbf9f" />
          <stop offset=".925" stopColor="#9a6f44" />
          <stop offset=".96" stopColor="#3a2412" />
          <stop offset=".975" stopColor="#25170b" />
          <stop offset="1" stopColor="#4a3019" />
        </linearGradient>
        <linearGradient id="recess" gradientUnits="userSpaceOnUse" x1="940" y1="430" x2="1100" y2="810" gradientTransform="rotate(-69 1000 619)">
          <stop offset="0" stopColor="#5d3d1f" />
          <stop offset=".45" stopColor="#7a5634" />
          <stop offset=".7" stopColor="#3f2813" />
          <stop offset="1" stopColor="#3a2612" />
        </linearGradient>
        <linearGradient id="floor" gradientUnits="userSpaceOnUse" x1="940" y1="430" x2="1080" y2="810" gradientTransform="rotate(-69 992 619)">
          <stop offset="0" stopColor="#3a2511" />
          <stop offset=".4" stopColor="#6f4d2b" />
          <stop offset="1" stopColor="#98673a" />
        </linearGradient>
        <linearGradient id="gasket" gradientUnits="userSpaceOnUse" x1="0" y1="430" x2="0" y2="740">
          <stop offset="0" stopColor="#808080" />
          <stop offset=".28" stopColor="#67656a" />
          <stop offset=".7" stopColor="#3d3640" />
          <stop offset="1" stopColor="#2a1c12" />
        </linearGradient>
        <linearGradient id="ring" gradientUnits="userSpaceOnUse" x1="920" y1="430" x2="1090" y2="800" gradientTransform="rotate(-68.700 984 617)">
          <stop offset="0" stopColor="#00f400" />
          <stop offset=".3" stopColor="#00d800" />
          <stop offset=".6" stopColor="#008a00" />
          <stop offset=".85" stopColor="#005200" />
          <stop offset="1" stopColor="#005800" />
        </linearGradient>
        <linearGradient id="glass" gradientUnits="userSpaceOnUse" x1="880" y1="690" x2="1110" y2="600" gradientTransform="rotate(-68.500 982 618)">
          <stop offset="0" stopColor="#d400d4" />
          <stop offset=".5" stopColor="#e40ee4" />
          <stop offset="1" stopColor="#f624f6" />
        </linearGradient>
        <linearGradient id="teal" x1="0" y1="0" x2="1" y2="0">
          <stop offset="0" stopColor="#0ca6a8" />
          <stop offset=".6" stopColor="#18b0b2" />
          <stop offset="1" stopColor="#33cdce" />
        </linearGradient>
        <linearGradient id="knob" gradientUnits="userSpaceOnUse" x1="1078" y1="398" x2="1096" y2="448" gradientTransform="rotate(-70 1086 421)">
          <stop offset="0" stopColor="#7f9ff0" />
          <stop offset=".4" stopColor="#3c4f8c" />
          <stop offset=".6" stopColor="#7a70b0" />
          <stop offset="1" stopColor="#252d52" />
        </linearGradient>
        <linearGradient id="vent" x1="0" y1="1" x2="1" y2="0">
          <stop offset="0" stopColor="#18bf87" />
          <stop offset="1" stopColor="#2bcf98" />
        </linearGradient>
      </defs>
      <rect x="238" width="1681" height="966" fill="#fefefe" />
      <rect x="238" width="1681" height="966" fill="url(#band)" />
      <rect x="238" width="1681" height="966" fill="url(#lobe)" />
      <Washer />
      <Triad />
    </svg>
  );
}

export default function App() {
  return (
    <div className="flex h-screen w-full overflow-hidden bg-white">
      <Sidebar />
      <main className="relative min-w-0 flex-1">
        <Scene />
        <header className="relative flex justify-center pt-1.5 pr-1">
          <ViewToolbar />
          <WindowButtons />
        </header>
        <TaskPane />
        <button aria-label="折叠面板" className="absolute top-[464px] -left-px flex h-[39px] w-[9px] items-center justify-center border border-l-0 border-[#8a8a8a] bg-[#f7f7f7]">
          <span className="size-1.5 rounded-full border border-[#999] bg-[#ccc]" />
        </button>
        <InputMethodBar />
      </main>
    </div>
  );
}
